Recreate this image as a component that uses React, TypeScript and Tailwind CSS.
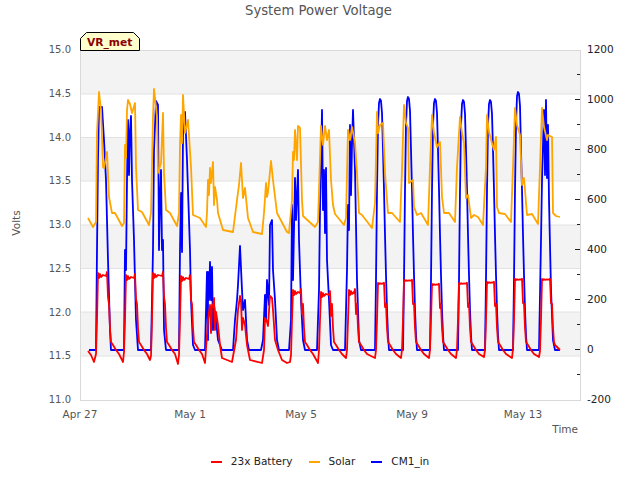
const font = "font-['DejaVu_Sans',sans-serif]";

type Pt = [number, number];

// grey bands behind the plot, top/bottom in page px
const bands = [[50, 94], [137.5, 181], [225, 268.5], [312, 356]];
const gridY = [94, 137.5, 181, 225, 268.5, 312, 356];
const leftTicks = ["15.0", "14.5", "14.0", "13.5", "13.0", "12.5", "12.0", "11.5", "11.0"];
const rightTicks = [1200, 1000, 800, 600, 400, 200, 0, -200];
const dates: [string, number][] = [["Apr 27", 80], ["May 1", 190], ["May 5", 301], ["May 9", 412], ["May 13", 523]];

const solar: Pt[] = [
  [88, 218], [93, 227], [96, 222], [97, 133], [99, 92], [101, 110], [103, 167], [104, 168], [107, 152], [109, 197], [112, 213], [115, 213], [122, 226],
  [124, 223], [125, 145], [126, 158], [127, 110], [128, 100], [130, 104], [132, 113], [135, 103], [136, 167], [138, 210], [142, 212], [149, 225],
  [151, 213], [153, 117], [154, 89], [157, 117], [158, 173], [161, 163], [163, 113], [164, 173], [166, 210], [170, 213], [177, 226],
  [179, 213], [180, 145], [181, 115], [182, 143], [183, 95], [185, 133], [188, 120], [191, 167], [193, 215], [200, 218], [206, 227],
  [207, 213], [208, 180], [209, 195], [210, 168], [211, 183], [213, 162], [214, 205], [215, 187], [217, 200], [218, 213], [223, 230], [233, 232],
  [237, 200], [239, 185], [241, 163], [243, 198], [245, 188], [248, 218], [253, 232], [262, 234],
  [264, 213], [266, 183], [267, 197], [268, 192], [271, 161], [273, 180], [277, 213], [287, 232], [289, 233],
  [292, 200], [293, 152], [294, 160], [295, 130], [297, 160], [298, 126], [300, 128], [302, 200], [303, 216], [315, 227],
  [318, 222], [319, 190], [321, 126], [323, 145], [325, 126], [327, 140], [329, 130], [331, 180], [333, 205], [335, 214], [344, 225],
  [346, 218], [348, 130], [350, 140], [352, 127], [355, 143], [357, 173], [359, 213], [362, 215], [372, 228],
  [375, 203], [377, 112], [378, 133], [380, 125], [383, 123], [385, 173], [388, 213], [392, 213], [400, 222],
  [402, 170], [404, 105], [406, 123], [408, 128], [409, 183], [413, 180], [414, 207], [417, 215], [421, 213], [428, 225],
  [430, 167], [432, 115], [434, 133], [437, 147], [440, 142], [442, 197], [444, 213], [449, 213], [455, 222],
  [457, 167], [460, 117], [462, 133], [464, 143], [466, 198], [468, 195], [471, 218], [474, 215], [478, 217], [483, 225],
  [486, 167], [487, 115], [489, 132], [492, 143], [494, 150], [496, 137], [497, 207], [499, 213], [505, 214], [511, 222],
  [513, 167], [515, 108], [517, 125], [520, 135], [522, 185], [524, 178], [527, 215], [532, 214], [538, 224],
  [540, 167], [542, 108], [544, 127], [547, 140], [548, 135], [552, 137], [553, 213], [556, 216], [560, 217],
];

// CM1_in: the smooth days only differ in where the peak is
const smoothDay = (xp: number, top: number): Pt[] => [
  [xp - 5, 350], [xp - 4, 280], [xp - 3, 190], [xp - 2, 125], [xp - 1, top + 4], [xp, top], [xp + 1, top + 2], [xp + 2, top + 14],
  [xp + 3, 150], [xp + 4, 190], [xp + 5, 235], [xp + 6, 275], [xp + 7, 310], [xp + 8, 335], [xp + 9, 350],
];

const cm1: Pt[] = [
  [89, 350], [96, 350], [97, 250], [98, 160], [99, 107], [102, 107], [104, 140], [106, 180], [108, 260], [110, 330], [111, 350],
  [124, 350], [125, 250], [126, 270], [127, 180], [128, 120], [129, 175], [130, 130], [131, 116], [132, 180], [134, 240], [136, 320], [138, 350],
  [151, 350], [153, 250], [154, 150], [156, 101], [158, 105], [159, 250], [160, 200], [161, 170], [162, 250], [163, 240], [164, 330], [166, 350],
  [179, 350], [180, 250], [181, 193], [182, 252], [183, 135], [185, 112], [187, 160], [190, 250], [191, 300], [193, 345], [195, 350],
  [205, 350], [207, 272], [208, 340], [208, 272], [209, 300], [210, 262], [211, 300], [212, 267], [213, 330], [214, 305], [216, 320], [218, 340], [220, 345], [222, 350],
  [233, 350], [235, 320], [237, 300], [238, 285], [240, 246], [242, 290], [243, 310], [245, 300], [247, 340], [249, 350],
  [261, 350], [263, 340], [265, 295], [266, 320], [267, 280], [269, 305], [270, 225], [272, 220], [273, 270], [275, 300], [277, 340], [279, 350],
  [289, 350], [291, 320], [292, 205], [293, 280], [295, 178], [296, 220], [298, 170], [299, 240], [301, 300], [303, 340], [305, 350],
  [317, 350], [319, 290], [320, 210], [321, 165], [322, 110], [323, 210], [324, 170], [325, 233], [326, 168], [327, 260], [329, 300], [331, 345], [333, 350],
  [345, 350], [347, 270], [348, 205], [349, 230], [350, 125], [351, 195], [352, 145], [353, 110], [355, 170], [357, 280], [359, 340], [361, 350],
  ...smoothDay(380, 99), ...smoothDay(408, 97), ...smoothDay(435, 99), ...smoothDay(463, 100), ...smoothDay(490, 100), ...smoothDay(518, 92),
  [539, 350], [541, 240], [542, 180], [544, 110], [545, 175], [546, 100], [547, 178], [548, 125], [549, 200], [551, 290], [553, 340], [555, 350], [560, 350],
];

// battery: rise, end of plateau, plateau y, low y before the rise, jitter on the plateau
const batteryDay = (r: number, end: number, p: number, low: number, next: number, j = 1): Pt[] => [
  [r - 1, low - 8], [r, 320], [r + 1, p], [r + 2, p + 5 * j], [r + 3, p + j], [r + 4, p + 4 * j], [r + 6, p + 2 * j], [end - 1, p + 3 * j], [end, p - j], [end + 1, p + 24], [end + 2, 304], [end + 3, 328], [end + 4, 342],
  [end + 6, 345], [end + 9, 350], [end + 12, 354], [next - 2, low],
];

const battery: Pt[] = [
  [88, 351], [91, 355], [94, 362],
  ...batteryDay(97, 107, 273, 362, 125), ...batteryDay(125, 135, 275, 360, 152), ...batteryDay(152, 163, 273, 364, 180), ...batteryDay(180, 190, 276, 363, 207),
  [208, 320], [210, 305], [211, 333], [212, 305], [213, 307], [214, 298], [215, 330], [216, 312], [218, 325], [220, 345], [222, 358], [232, 362],
  [236, 340], [238, 310], [240, 296], [241, 300], [242, 330], [243, 318], [245, 325], [247, 345], [250, 360], [262, 363],
  [264, 350], [265, 318], [267, 322], [268, 326], [270, 296], [272, 298], [273, 310], [275, 340], [278, 350], [282, 360], [287, 363], [290, 362],
  ...batteryDay(292, 301, 290, 363, 320), ...batteryDay(320, 330, 292, 358, 348), ...batteryDay(348, 355, 290, 358, 377),
  ...batteryDay(377, 384, 283, 358, 403, 0.2), ...batteryDay(403, 412, 280, 358, 431, 0.2), ...batteryDay(431, 439, 284, 358, 458, 0.2), ...batteryDay(458, 467, 283, 357, 486, 0.2),
  ...batteryDay(486, 494, 282, 358, 514, 0.2), ...batteryDay(514, 522, 279, 357, 541, 0.2), ...batteryDay(541, 550, 279, 359, 568, 0.2).slice(0, 13),
  [555, 345], [560, 350],
];

const toPoints = (pts: Pt[]) => pts.map((p) => p.join(",")).join(" ");

function LegendItem({ color, label }: { color: string; label: string }) {
  return (
    <div className="flex items-center gap-[9px]">
      <span className={`w-[11px] h-[2px] mt-[2px] ${color}`}></span>
      <span className="text-[10.5px] leading-none text-[#222]">{label}</span>
    </div>
  );
}

export default function App() {
  return (
    <div className={`w-[640px] h-[480px] bg-white flex flex-col overflow-hidden ${font}`}>
      <div className="h-[30px] pt-[3px] pr-[3px] text-center text-[13.2px] leading-4 text-[#555]">System Power Voltage</div>

      <svg width="640" height="410" viewBox="0 30 640 410" className="block text-[10.5px]">
        {/* bands + grid */}
        <rect x="80.5" y="50" width="499.5" height="350" fill="#ffffff" />
        {bands.map(([a, b]) => (
          <rect key={a} x="81" y={a} width="499" height={b - a} fill="#f3f3f3" />
        ))}
        {gridY.map((y) => (
          <line key={y} x1="81" x2="580" y1={y} y2={y} stroke="#e2e2e2" strokeWidth="1" />
        ))}
        <rect x="80.5" y="50.5" width="500" height="350" fill="none" stroke="#d9d9d9" strokeWidth="1" />

        {/* right axis ticks */}
        {[1100, 900, 700, 500, 300, 100, -100].map((v) => (
          <line key={v} x1="577" x2="580" y1={349.5 - v * 0.25} y2={349.5 - v * 0.25} stroke="#222" />
        ))}
        {[1000, 800, 600, 400, 200, 0].map((v) => (
          <line key={v} x1="575" x2="580" y1={349.5 - v * 0.25} y2={349.5 - v * 0.25} stroke="#222" />
        ))}

        {/* series */}
        <polyline points={toPoints(cm1)} fill="none" stroke="#0000ff" strokeWidth="1.8" strokeLinejoin="round" />
        <polyline points={toPoints(solar)} fill="none" stroke="#ffa500" strokeWidth="1.8" strokeLinejoin="round" />
        <polyline points={toPoints(battery)} fill="none" stroke="#ff0000" strokeWidth="1.8" strokeLinejoin="round" />

        {/* axis labels */}
        {leftTicks.map((t, i) => (
          <text key={t} x="71" y={53 + i * 43.75} textAnchor="end" fill="#555" fontSize="10">{t}</text>
        ))}
        {rightTicks.map((t, i) => (
          <text key={t} x="587" y={53 + i * 50} fill="#222">{t}</text>
        ))}
        {dates.map(([d, x]) => (
          <text key={d} x={x} y="417.5" textAnchor="middle" fill="#555">{d}</text>
        ))}
        <text x="578" y="433" textAnchor="end" fill="#555">Time</text>
        <text transform="translate(20 223) rotate(-90)" textAnchor="middle" fill="#555">Volts</text>

        {/* station tag */}
        <polygon points="80.5,50.5 80.5,38.5 86.5,32.5 133.5,32.5 139.5,38.5 139.5,50.5" fill="#ffffcc" stroke="#000" strokeWidth="1" />
        <text x="87" y="46" fontSize="10.7" fontWeight="700" fill="#8b0000">VR_met</text>
      </svg>

      <div className="flex-1 flex items-start justify-center gap-[16px] pt-[16px]">
        <LegendItem color="bg-[#ff0000]" label="23x Battery" />
        <LegendItem color="bg-[#ffa500]" label="Solar" />
        <LegendItem color="bg-[#0000ff]" label="CM1_in" />
      </div>
    </div>
  );
}
